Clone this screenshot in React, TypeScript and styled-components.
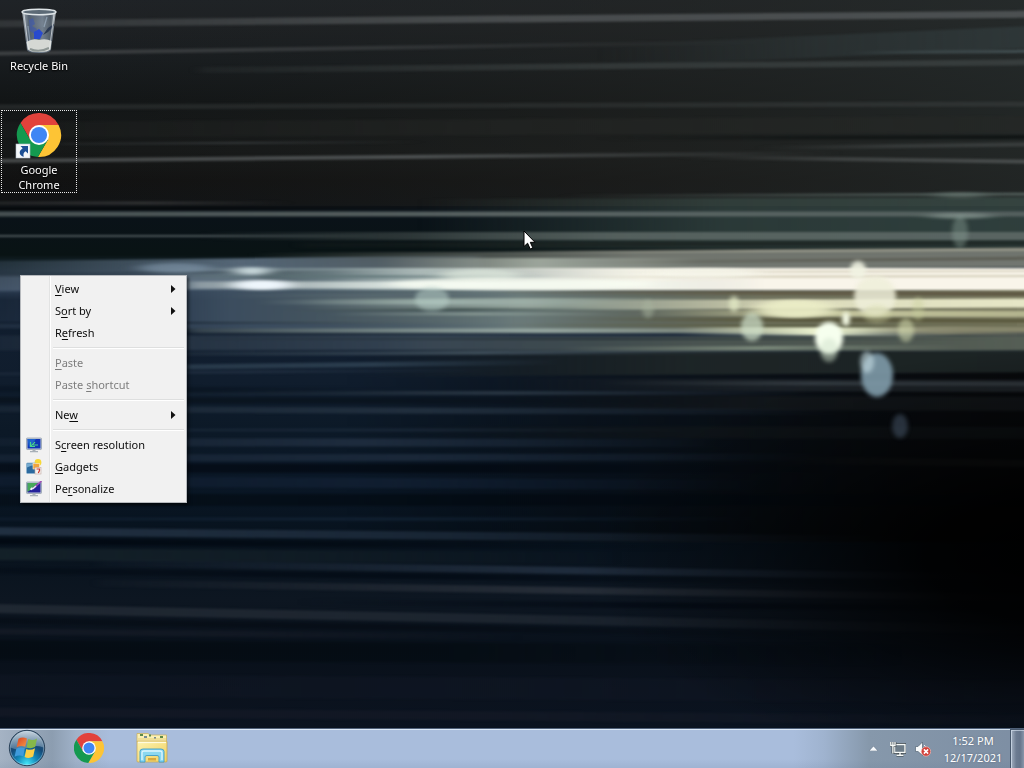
import React, { useEffect, useState } from "react";
import styled, { createGlobalStyle } from "styled-components";

const GlobalStyle = createGlobalStyle`
  *, *::before, *::after { box-sizing: border-box; }
  html, body, #root { height: 100%; }
  body {
    margin: 0;
    overflow: hidden;
    background: #000;
    font-family: "Noto Sans", "Open Sans", sans-serif;
    font-size: 12px;
  }
  button { font: inherit; color: inherit; border: 0; background: none; padding: 0; }
`;

const Screen = styled.div`
  display: flex;
  flex-direction: column;
  height: 100vh;
`;

const Desktop = styled.main`
  position: relative;
  flex: 1;
  min-height: 0;
  isolation: isolate;
`;

const WallpaperArt = styled.svg`
  position: absolute;
  inset: 0;
  z-index: -1;
  width: 100%;
  height: 100%;
`;

const Shortcuts = styled.nav`
  display: flex;
  flex-direction: column;
  align-items: flex-start;
  gap: 36px;
  padding: 6px 1px;
`;

const Shortcut = styled.button<{ $focused?: boolean }>`
  display: flex;
  flex-direction: column;
  align-items: center;
  gap: 3px;
  width: 76px;
  border: 1px dotted ${(p) => (p.$focused ? "#e8e8e8" : "transparent")};
  color: #fff;
  font-size: 11px;
  line-height: 15px;
  text-shadow: 0 1px 2px #000, 0 0 2px #000;
  svg { display: block; width: 48px; height: 48px; }
`;

const ShortcutLabel = styled.span`
  max-width: 64px;
`;

const Menu = styled.div`
  position: absolute;
  left: 20px;
  top: 275px;
  width: 167px;
  padding: 2px;
  border: 1px solid #f7f7f7;
  outline: 1px solid rgba(60, 70, 80, 0.35);
  outline-offset: -1px;
  color: #0c0c0c;
  background: linear-gradient(90deg, #f1f1f1 28px, #e2e3e3 28px, #e2e3e3 29px, #fff 29px, #fff 30px, #f1f1f1 30px);
  box-shadow: 2px 2px 3px rgba(0, 0, 0, 0.5);
`;

const MenuItem = styled.button`
  display: grid;
  grid-template-columns: 32px 1fr 13px;
  align-items: center;
  width: 100%;
  height: 22px;
  font-size: 11px;
  line-height: 22px;
  text-align: left;
  &:disabled { color: #7d7d7d; }
  svg { display: block; }
  u { text-underline-offset: 2px; text-decoration-thickness: 1px; text-decoration-skip-ink: none; }
`;

const MenuIcon = styled.span`
  padding-left: 3px;
`;

const Separator = styled.hr`
  height: 8px;
  margin: 0 0 0 30px;
  border: 0;
  background: linear-gradient(#f1f1f1 3px, #dedfdf 3px, #dedfdf 4px, #fff 4px, #fff 5px, #f1f1f1 5px);
`;

const Pointer = styled.svg`
  position: absolute;
  left: 51.1%;
  top: 230px;
  width: 13px;
  height: 20px;
`;

const Taskbar = styled.footer`
  display: flex;
  height: 40px;
  border-top: 1px solid #4f6078;
  background:
    linear-gradient(rgba(226, 238, 250, 0.85) 1px, transparent 1px, transparent 30px, rgba(90, 110, 140, 0.12)),
    linear-gradient(90deg, #a5b3c4, #8c9db0 52px, #a0b2c9 76px, #a9bddc 110px, #a9bddc calc(100% - 230px), #9fb3cf calc(100% - 200px), #8698ab calc(100% - 155px), #7d8ea3);
`;

const TaskButton = styled.button`
  display: flex;
  align-items: center;
  justify-content: center;
  width: 63px;
  padding-bottom: 2px;
  &:first-child { width: 57px; padding-right: 4px; }
  svg { display: block; }
`;

const Tray = styled.div`
  display: flex;
  align-items: center;
  gap: 9px;
  margin-left: auto;
`;

const TrayButton = styled.button`
  display: flex;
  align-items: center;
  justify-content: center;
  height: 24px;
  &:first-child { margin-right: 3px; }
  svg { display: block; }
`;

const Clock = styled.button`
  width: 66px;
  color: #fff;
  font-size: 11px;
  line-height: 17px;
  text-align: center;
  text-shadow: 0 0 2px rgba(60, 75, 95, 0.6);
`;

const ShowDesktop = styled.button`
  width: 14px;
  margin-left: 4px;
  border: 1px solid #46566a;
  border-right: 0;
  border-bottom: 0;
  background: linear-gradient(90deg, #a3b0c1, #6c7b91 40%, #66758b 70%, #8896aa);
  box-shadow: inset 1px 1px 0 rgba(220, 232, 245, 0.6);
`;

/* x1, y1, x2, y2, thickness, colour, opacity at start / middle / end */
type Streak = [number, number, number, number, number, string, number, number, number];

const streaks: Streak[] = [
  // upper sky
  [0, 24, 1024, 14, 7, "#565a5c", 0.35, 0.75, 0.8],
  [0, 54, 760, 42, 4, "#414446", 0.9, 0.6, 0],
  [200, 70, 1024, 62, 6, "#3c4242", 0.2, 0.7, 0.8],
  [600, 56, 1024, 36, 22, "#354042", 0, 0.4, 0.6],
  [850, 53, 1024, 51, 3, "#506064", 0, 0.5, 0.7],
  [0, 107, 1024, 104, 5, "#353939", 0.5, 0.5, 0.7],
  [0, 130, 1024, 124, 16, "#262826", 0.2, 0.5, 0.6],
  [600, 138, 1024, 137, 4, "#0c1010", 0, 0.6, 0.8],
  [60, 144, 420, 142, 2, "#3a3e40", 0.3, 0.8, 0],
  [0, 161, 840, 153, 4, "#585c5d", 0.7, 0.8, 0],
  [680, 157, 1024, 162, 4, "#4c5050", 0, 0.7, 0.9],
  [760, 148, 1024, 144, 4, "#434747", 0, 0.6, 0.7],
  [0, 203, 290, 203, 3, "#38393b", 0.5, 0.8, 0],
  [0, 209, 400, 208, 2, "#000000", 0.7, 0.6, 0],
  [560, 196, 1024, 194, 3, "#5a6864", 0, 0.5, 0.8],
  [420, 224, 1024, 222, 50, "#3c4e49", 0, 0.65, 0.75],
  [0, 214, 1024, 214, 5, "#616b6a", 0.7, 0.9, 0.75],
  [0, 236, 400, 236, 2, "#5b6568", 0.8, 0.8, 0],
  [200, 236, 1024, 236, 8, "#616c69", 0, 0.8, 0.85],
  [300, 245, 1024, 243, 5, "#1c2321", 0.2, 0.8, 0.7],
  // halo over the beam
  [0, 268, 480, 262, 13, "#5d6f80", 0.2, 0.9, 0.4],
  [250, 262, 1024, 258, 18, "#7c8078", 0, 0.9, 0.9],
  [500, 252, 1024, 249, 3, "#aaa999", 0, 0.7, 0.8],
  [540, 263, 1024, 258, 3, "#58574e", 0, 0.6, 0.8],
  [380, 263, 700, 263, 10, "#aeb7ab", 0, 0.8, 0],
  // beam
  [0, 283, 260, 281, 17, "#607184", 0.5, 0.9, 0.6],
  [0, 275, 240, 275, 3, "#1f2c38", 0.5, 0.5, 0],
  [140, 279, 700, 279, 22, "#93a6a8", 0, 0.95, 0],
  [330, 279, 960, 279, 22, "#f6f8ec", 0, 1, 0],
  [500, 279, 1024, 279, 22, "#f9f5ea", 0, 1, 1],
  [190, 285, 760, 285, 7, "#ecf4ee", 0.3, 0.95, 0],
  [190, 276, 560, 277, 3, "#5c7274", 0.3, 0.7, 0],
  [560, 277, 1024, 276, 2, "#c6c0a8", 0, 0.8, 0.7],
  [600, 272, 1024, 271, 2, "#c0baa2", 0, 0.6, 0.5],
  // under the beam
  [0, 306, 460, 306, 32, "#31435a", 0.3, 0.9, 0],
  [180, 311, 860, 311, 42, "#6f8080", 0.1, 0.95, 0],
  [500, 312, 1024, 311, 42, "#7b7b61", 0, 0.85, 1],
  [480, 292, 1024, 294, 4, "#5c5440", 0, 0.7, 0.9],
  [230, 296, 520, 295, 4, "#5b6b72", 0, 0.7, 0],
  [300, 304, 760, 304, 12, "#b4c4b6", 0, 0.6, 0],
  [260, 302, 620, 302, 5, "#a3b7b0", 0, 0.85, 0],
  [280, 310, 640, 309, 3, "#374745", 0, 0.7, 0],
  [330, 314, 620, 314, 3, "#93a49c", 0, 0.7, 0],
  [560, 305, 1024, 303, 9, "#e6e6c6", 0, 0.9, 1],
  [640, 313, 1024, 314, 6, "#d8d9ac", 0, 0.8, 0.6],
  [560, 319, 1024, 321, 4, "#545237", 0, 0.8, 0.8],
  [500, 325, 1024, 326, 3, "#5a5c43", 0, 0.8, 0.6],
  [0, 326, 520, 326, 5, "#41546a", 0.3, 0.7, 0],
  [190, 331, 900, 331, 5, "#a9bab2", 0.15, 0.7, 0],
  [680, 331, 960, 332, 8, "#eff6d2", 0, 1, 0],
  [860, 330, 1024, 331, 9, "#8d8c72", 0, 0.8, 0.6],
  [0, 343, 860, 342, 15, "#3d4c5b", 0.2, 0.8, 0],
  [380, 345, 1024, 343, 15, "#626a5c", 0, 0.65, 0.85],
  [200, 339, 1000, 339, 2, "#202b31", 0.2, 0.7, 0],
  [560, 349, 960, 347, 4, "#8d9c8a", 0, 0.7, 0],
  [100, 354, 860, 352, 4, "#4e5f6b", 0, 0.7, 0],
  [360, 366, 1024, 361, 22, "#222a2a", 0, 0.8, 0.8],
  [180, 367, 560, 362, 5, "#364a5b", 0.6, 0.7, 0],
  [0, 374, 500, 370, 3, "#2d3c4f", 0.3, 0.5, 0],
  [500, 384, 1024, 386, 12, "#252b30", 0, 0.6, 0.8],
  [600, 383, 1024, 384, 4, "#3a4248", 0, 0.7, 0.7],
  // lower water
  [180, 393, 820, 393, 4, "#303d4a", 0.1, 0.75, 0],
  [500, 402, 1024, 404, 14, "#15191c", 0, 0.7, 0.8],
  [0, 389, 420, 391, 6, "#06101b", 0.4, 0.5, 0],
  [0, 409, 840, 412, 6, "#263443", 0.4, 0.8, 0],
  [0, 400, 760, 401, 6, "#070e15", 0.5, 0.5, 0],
  [180, 430, 700, 430, 3, "#243345", 0.4, 0.5, 0],
  [400, 432, 1024, 433, 12, "#12171a", 0, 0.6, 0.7],
  [0, 442, 720, 443, 8, "#202e40", 0.3, 0.9, 0],
  [0, 458, 820, 457, 7, "#1e2c3e", 0.5, 0.8, 0],
  [0, 468, 900, 469, 9, "#02070f", 0.5, 0.7, 0],
  [780, 460, 1024, 464, 7, "#161819", 0, 0.5, 0.9],
  [0, 481, 760, 485, 10, "#122033", 0.5, 0.8, 0],
  [0, 500, 1024, 500, 12, "#020910", 0.4, 0.7, 0.4],
  [0, 519, 760, 519, 3, "#16273a", 0.4, 0.7, 0],
  [0, 531, 900, 540, 8, "#243345", 0.9, 0.6, 0],
  [0, 541, 700, 547, 6, "#020912", 0.9, 0.6, 0],
  [0, 554, 620, 558, 12, "#17242b", 0.8, 0.5, 0],
  [100, 563, 1024, 578, 7, "#233041", 0.1, 0.85, 0.1],
  [0, 570, 900, 583, 6, "#030b15", 0.5, 0.8, 0],
  [100, 583, 1024, 598, 7, "#282f39", 0.1, 0.9, 0.2],
  [0, 608, 1024, 630, 9, "#222a34", 0.9, 0.75, 0.1],
  [300, 602, 1024, 609, 6, "#030a14", 0, 0.8, 0.2],
  [0, 620, 900, 636, 6, "#050b13", 0.5, 0.6, 0],
  [0, 631, 520, 637, 6, "#191e29", 0.6, 0.5, 0],
  [0, 650, 900, 655, 20, "#050c12", 0.7, 0.7, 0],
  [0, 685, 1024, 692, 22, "#101724", 0.5, 0.6, 0.3],
  [0, 712, 1024, 720, 9, "#151a26", 0.7, 0.7, 0.3],
];

/* cx, cy, rx, ry, colour, opacity */
type Light = [number, number, number, number, string, number];

const flares: Light[] = [
  [175, 268, 36, 5, "#8499ae", 0.6],
  [252, 271, 18, 4, "#d3e2e4", 0.9],
  [262, 285, 30, 5, "#eef6fc", 1],
  [480, 275, 40, 6, "#e8f2e4", 0.6],
  [520, 284, 130, 6, "#fbfff4", 0.7],
  [705, 273, 55, 5, "#fbfbf0", 0.6],
  [795, 309, 40, 9, "#ebedc6", 0.9],
  [960, 216, 32, 3, "#8fa099", 0.6],
  [960, 195, 26, 3, "#74857e", 0.5],
];

const orbs: Light[] = [
  [432, 299, 17, 12, "#b6cec6", 0.55],
  [648, 309, 6, 9, "#a7b39d", 0.5],
  [734, 304, 5, 8, "#e6edc8", 0.7],
  [752, 327, 11, 14, "#cfe0c9", 0.7],
  [829, 338, 14, 16, "#f6ffee", 1],
  [829, 350, 9, 12, "#cfe2cc", 0.5],
  [846, 319, 4, 7, "#f6fce6", 1],
  [858, 270, 8, 9, "#f1f3e2", 0.9],
  [875, 296, 21, 20, "#eeeed9", 0.85],
  [877, 314, 14, 9, "#d3d7a4", 0.4],
  [906, 330, 8, 12, "#e0e8b8", 0.5],
  [918, 309, 6, 12, "#c9cf9a", 0.4],
  [877, 375, 16, 22, "#7f9baa", 0.9],
  [867, 362, 7, 11, "#c7dde4", 0.6],
  [900, 426, 8, 12, "#4a5a6d", 0.5],
  [960, 232, 8, 16, "#8ea49c", 0.4],
];

function Wallpaper() {
  return (
    <WallpaperArt viewBox="0 0 1024 728" preserveAspectRatio="none" aria-hidden="true">
      <defs>
        <linearGradient id="ground" x1="0" y1="0" x2="0" y2="728" gradientUnits="userSpaceOnUse">
          {[
            [0, "#1f2327"], [22, "#1e2124"], [60, "#181c1f"], [100, "#121516"], [150, "#161818"], [180, "#111111"],
            [204, "#101214"], [212, "#0a1219"], [255, "#091314"], [262, "#142128"], [290, "#26364a"], [300, "#0e1a29"],
            [340, "#111e2f"], [380, "#101d2d"], [430, "#0c1927"], [480, "#0a1726"], [540, "#07121d"], [600, "#0d1621"],
            [650, "#08101a"], [690, "#0b121d"], [728, "#0a1320"],
          ].map(([y, c]) => (
            <stop key={y} offset={Number(y) / 728} stopColor={String(c)} />
          ))}
        </linearGradient>
        <linearGradient id="warm" x1="0" x2="1">
          <stop offset="0" stopColor="#1c1f1e" stopOpacity="0" />
          <stop offset="0.6" stopColor="#242624" stopOpacity="0.5" />
          <stop offset="1" stopColor="#272c2b" stopOpacity="0.75" />
        </linearGradient>
        <radialGradient id="night" cx="1070" cy="560" r="480" gradientUnits="userSpaceOnUse" gradientTransform="translate(0 314) scale(1 .44)">
          <stop offset="0" stopColor="#000" stopOpacity="1" />
          <stop offset="0.3" stopColor="#000" stopOpacity="0.9" />
          <stop offset="0.65" stopColor="#000" stopOpacity="0.4" />
          <stop offset="1" stopColor="#000" stopOpacity="0" />
        </radialGradient>
        <linearGradient id="shade" x1="0" x2="1">
          <stop offset="0.35" stopColor="#000" stopOpacity="0" />
          <stop offset="0.85" stopColor="#070809" stopOpacity="0.8" />
          <stop offset="1" stopColor="#070707" stopOpacity="0.9" />
        </linearGradient>
        <filter id="smear" x="-5%" y="-5%" width="110%" height="110%" colorInterpolationFilters="sRGB">
          <feGaussianBlur stdDeviation="6 1" />
        </filter>
        <filter id="flare" x="-10%" y="-10%" width="120%" height="120%" colorInterpolationFilters="sRGB">
          <feGaussianBlur stdDeviation="9 1.5" />
        </filter>
        <filter id="glow" x="-5%" y="-5%" width="110%" height="110%" colorInterpolationFilters="sRGB">
          <feGaussianBlur stdDeviation="2" />
        </filter>
        {streaks.map(([x1, , x2, , , c, a, b, d], i) => (
          <linearGradient key={i} id={`s${i}`} x1={x1} x2={x2} y1="0" y2="0" gradientUnits="userSpaceOnUse">
            <stop offset="0" stopColor={c} stopOpacity={a} />
            <stop offset="0.5" stopColor={c} stopOpacity={b} />
            <stop offset="1" stopColor={c} stopOpacity={d} />
          </linearGradient>
        ))}
      </defs>
      <rect width="1024" height="728" fill="url(#ground)" />
      <rect width="1024" height="206" fill="url(#warm)" />
      <g filter="url(#smear)">
        <rect x="-30" y="352" width="1084" height="190" fill="url(#shade)" />
        {streaks.map(([x1, y1, x2, y2, t], i) => {
          const l = x1 === 0 ? -30 : x1;
          const r = x2 === 1024 ? 1054 : x2;
          const h = t / 2;
          return <path key={i} d={`M${l} ${y1 - h}L${r} ${y2 - h}V${y2 + h}L${l} ${y1 + h}Z`} fill={`url(#s${i})`} />;
        })}
      </g>
      <rect y="340" width="1024" height="388" fill="url(#night)" />
      <g filter="url(#flare)">
        {flares.map(([cx, cy, rx, ry, c, o], i) => (
          <ellipse key={i} cx={cx} cy={cy} rx={rx} ry={ry} fill={c} opacity={o} />
        ))}
      </g>
      <g filter="url(#glow)">
        {orbs.map(([cx, cy, rx, ry, c, o], i) => (
          <ellipse key={i} cx={cx} cy={cy} rx={rx} ry={ry} fill={c} opacity={o} />
        ))}
      </g>
    </WallpaperArt>
  );
}

function ChromeLogo({ size, shortcut = false }: { size: number; shortcut?: boolean }) {
  return (
    <svg width={size} height={size} viewBox={shortcut ? "0 0 48 48" : "2 2 44 44"} aria-hidden="true">
      <path d="M43.6 14H24L15.3 29 5.5 12A22 22 0 0 1 43.6 14Z" fill="#e2423b" />
      <path d="M43.6 14A22 22 0 0 1 22.9 46L32.7 29 24 14Z" fill="#fdc435" />
      <path d="M22.9 46A22 22 0 0 1 5.5 12L15.3 29H32.7Z" fill="#14994f" />
      <circle cx="24" cy="24" r="10" fill="#fff" />
      <circle cx="24" cy="24" r="8.1" fill="#4086f4" />
      {shortcut && (
        <g>
          <rect x="1" y="33" width="14" height="14" fill="#f4f7fa" stroke="#b9c4cf" strokeWidth=".6" />
          <path d="M5.500 35H13V42.500L10.600 40.200C8.600 41.500 8 43.200 8.800 45.800 3.800 44.500 3.300 40.200 7.700 37.300Z" fill="#1c4f94" />
        </g>
      )}
    </svg>
  );
}

function RecycleBin() {
  return (
    <svg viewBox="0 0 48 48" aria-hidden="true">
      <defs>
        <linearGradient id="glass" x1="0" x2="1">
          <stop offset="0" stopColor="#c5ced6" stopOpacity=".85" />
          <stop offset=".2" stopColor="#5f6f82" stopOpacity=".8" />
          <stop offset=".6" stopColor="#8797a8" stopOpacity=".8" />
          <stop offset=".85" stopColor="#5d6a77" stopOpacity=".8" />
          <stop offset="1" stopColor="#d3d9de" stopOpacity=".9" />
        </linearGradient>
      </defs>
      <path d="M7 4 12 43Q13 46 24 46T36 43L41 4Z" fill="url(#glass)" />
      <path d="M11.500 35Q17 31 24 33 31 31 36.500 34L35.500 42.500Q33 45 24 45T12.800 42.500Z" fill="#d5d8d4" />
      <path d="M15 42Q24 46 34 41" fill="none" stroke="#8d9694" strokeWidth="2" />
      <path d="M14 13l4-2 2 6-3 2 5 3-2 5-5-3Z" fill="#3c56b0" opacity=".6" />
      <path d="M19 25l5-3 4 4-3 6h-6Z" fill="#2246d6" opacity=".9" />
      <path d="M28 28l5-7 6-4-1 3-5 5Z" fill="#2b3950" />
      <path d="M13 19 15 34M32 10 29 20" stroke="#a4b7cb" strokeWidth="1.200" opacity=".6" />
      <path d="M9 7 13.500 42M39 7 34.500 42" stroke="#e3e8eb" strokeWidth="1" opacity=".7" />
      <ellipse cx="24" cy="5" rx="17" ry="2.800" fill="#5c6a76" stroke="#dfe5e8" strokeWidth="1.400" />
    </svg>
  );
}

function Monitor({ brush = false }: { brush?: boolean }) {
  return (
    <svg width="16" height="16" viewBox="0 0 16 16" aria-hidden="true">
      <rect x=".5" y="1" width="15" height="11.500" rx=".8" fill="#c6d0da" stroke="#8a97a6" strokeWidth=".7" />
      <rect x="1.500" y="2" width="13" height="9.500" fill={brush ? "#24209a" : "#1033b4"} />
      {brush ? (
        <g>
          <path d="M1.500 2H12L5 8.500 1.500 11Z" fill="#47a85a" />
          <path d="M4 8.500C5 6 6.500 6.200 7.500 7.500L5.500 9.200Z" fill="#f1f4fa" />
          <path d="M7 7.500 15.500 0" stroke="#a052b5" strokeWidth="1.600" />
          <path d="M6.500 8 10 5" stroke="#e8e8f2" strokeWidth="1.400" />
        </g>
      ) : (
        <g>
          <path d="M1.500 2H10L3 10.500Z" fill="#1f62cc" />
          <path d="M4.500 5V9.500H9M4.500 9.500 9 5M7 8H12" fill="none" stroke="#49d48c" strokeWidth="1.100" />
        </g>
      )}
      <path d="M6.500 12.500h3v1.500h2.500v1.200H4v-1.200h2.500Z" fill="#a8b0b8" />
    </svg>
  );
}

function GadgetsIcon() {
  return (
    <svg width="16" height="16" viewBox="0 0 16 16" aria-hidden="true">
      <circle cx="12" cy="3.500" r="3.400" fill="#f7d836" />
      <rect x=".5" y="4" width="9.500" height="10.500" rx="1" fill="#2c6a9f" stroke="#8eb4cf" strokeWidth=".8" />
      <path d="M1 8.500Q5 6 9.500 6V4.500H1Z" fill="#76abd0" />
      <rect x="7" y="4.500" width="6.500" height="5.500" fill="#f0a33d" stroke="#fff0cf" strokeWidth=".6" />
      <rect x="9" y="8.500" width="6" height="6.500" fill="#f7f2ef" stroke="#c4aaa3" strokeWidth=".6" />
      <path d="M10.500 10h3v1.500l-1.200 2.500" fill="none" stroke="#d0392f" strokeWidth="1.200" />
    </svg>
  );
}

function StartOrb() {
  return (
    <svg width="38" height="38" viewBox="0 0 38 38" aria-hidden="true">
      <defs>
        <radialGradient id="orb" cx=".5" cy=".95" r=".85">
          <stop offset="0" stopColor="#45e6f7" />
          <stop offset=".35" stopColor="#1286b8" />
          <stop offset=".65" stopColor="#154a78" />
          <stop offset="1" stopColor="#395a78" />
        </radialGradient>
        <linearGradient id="shine" x1="0" y1="0" x2="0" y2="1">
          <stop offset="0" stopColor="#dfe9f0" stopOpacity=".85" />
          <stop offset="1" stopColor="#a9c0d2" stopOpacity=".35" />
        </linearGradient>
        <linearGradient id="flagRed" x1="0" y1="0" x2="1" y2="1">
          <stop offset="0" stopColor="#d9401e" />
          <stop offset="1" stopColor="#f49a4c" />
        </linearGradient>
      </defs>
      <circle cx="19" cy="19" r="17.700" fill="url(#orb)" stroke="#2a4158" strokeWidth="1" />
      <path d="M2.500 18.500A16.500 16.500 0 0 1 35.500 18.500Q27 15.500 19 19 10 22 2.500 18.500Z" fill="url(#shine)" />
      <circle cx="19" cy="19" r="16.700" fill="none" stroke="#cfe4ef" strokeOpacity=".5" strokeWidth=".8" />
      <path d="M10.500 9.800Q14.500 7.200 19 9.500L17.200 17.800Q13 16 8.600 18.300Z" fill="url(#flagRed)" />
      <path d="M20.300 10Q24.800 12.300 29 9.500L27.300 17.800Q22.800 20.500 18.600 18.300Z" fill="#85b84a" />
      <path d="M8.300 19.700Q12.700 17.500 16.900 19.300L15.200 27.300Q11 25.300 6.600 27.800Z" fill="#3f9bdc" />
      <path d="M18.300 19.900Q22.500 22 27 19.300L25.200 27.600Q20.800 30.300 16.600 28Z" fill="#fbcf45" />
    </svg>
  );
}

function ExplorerIcon() {
  return (
    <svg width="32" height="32" viewBox="0 0 32 32" aria-hidden="true">
      <defs>
        <linearGradient id="folder" x1="0" y1="0" x2="1" y2="1">
          <stop offset="0" stopColor="#fdf3b0" />
          <stop offset="1" stopColor="#f0d060" />
        </linearGradient>
      </defs>
      <path d="M1 1.500H12L14 3H30.500V10H1Z" fill="#faf0b4" stroke="#c9ae58" strokeWidth=".7" />
      <path d="M4 3h3M13 3.500h2M24 5h3" stroke="#5c8a48" strokeWidth="1.800" />
      <path d="M8 5h3M18 6h2" stroke="#4a6a88" strokeWidth="1.600" />
      <path d="M2 7H30" stroke="#e6cf78" strokeWidth="1" />
      <rect x="1" y="9" width="30" height="21" rx="1" fill="url(#folder)" stroke="#c3a24a" strokeWidth=".7" />
      <path d="M2 10.500H30" stroke="#fffbe0" strokeWidth="1.200" />
      <path d="M4 30V19.500Q4 17 7 17H25Q28 17 28 19.500V30H23V25Q23 23.500 21 23.500H11Q9 23.500 9 25V30Z" fill="#8bd8f0" stroke="#3d9cc8" strokeWidth=".9" />
      <path d="M6 28V20.500Q6 19 8 19H24Q26 19 26 20.500V28" fill="none" stroke="#dff6fd" strokeWidth="1.300" />
      <path d="M12 26H20V28.500H12Z" fill="#d8a93c" />
    </svg>
  );
}

function NetworkIcon() {
  return (
    <svg width="16" height="16" viewBox="0 0 16 16" aria-hidden="true">
      <rect x="4.500" y="3.500" width="10.500" height="8" fill="#73838f" stroke="#2f3a40" strokeWidth="2.800" />
      <rect x="4.500" y="3.500" width="10.500" height="8" fill="#6d7c88" stroke="#f7faf8" strokeWidth="1.400" />
      <path d="M6.500 14.200H13.500M10 12V14" stroke="#2f3a40" strokeWidth="2.800" />
      <path d="M6.500 14.200H13.500M10 12V14" stroke="#f7faf8" strokeWidth="1.400" />
      <path d="M.8 1V4.500H5V1M2.900 1V12.500" fill="none" stroke="#2f3a40" strokeWidth="2.600" />
      <path d="M.8 1V4.500H5V1M2.900 1V12.500" fill="none" stroke="#f7faf8" strokeWidth="1.400" />
    </svg>
  );
}

function VolumeIcon() {
  return (
    <svg width="16" height="16" viewBox="0 0 16 16" aria-hidden="true">
      <path d="M.5 5.500H3L7.500 1V14.500L3 10.500H.5Z" fill="#f8fafb" stroke="#556575" strokeWidth=".7" />
      <path d="M9 4Q11 5.500 11 7" fill="none" stroke="#f0f3f6" strokeWidth="1" />
      <circle cx="11" cy="10.500" r="4.700" fill="#d2403a" stroke="#f1b9b2" strokeWidth=".7" />
      <path d="M8.900 8.400 13.100 12.600M13.100 8.400 8.900 12.600" stroke="#fff" strokeWidth="1.500" />
    </svg>
  );
}

function SubmenuArrow() {
  return (
    <svg width="5" height="8" viewBox="0 0 5 8" aria-hidden="true">
      <path d="M0 0 4.500 4 0 8Z" fill="#111" />
    </svg>
  );
}

type Entry = { text: [string, string, string]; icon?: React.ReactNode; submenu?: boolean; disabled?: boolean };

const groups: Entry[][] = [
  [
    { text: ["", "V", "iew"], submenu: true },
    { text: ["S", "o", "rt by"], submenu: true },
    { text: ["R", "e", "fresh"] },
  ],
  [
    { text: ["", "P", "aste"], disabled: true },
    { text: ["Paste ", "s", "hortcut"], disabled: true },
  ],
  [{ text: ["Ne", "w", ""], submenu: true }],
  [
    { text: ["S", "c", "reen resolution"], icon: <Monitor /> },
    { text: ["", "G", "adgets"], icon: <GadgetsIcon /> },
    { text: ["Pe", "r", "sonalize"], icon: <Monitor brush /> },
  ],
];

function ContextMenu() {
  return (
    <Menu role="menu">
      {groups.map((entries, g) => (
        <React.Fragment key={g}>
          {g > 0 && <Separator />}
          {entries.map(({ text, icon, submenu, disabled }) => (
            <MenuItem key={text.join("")} role="menuitem" disabled={disabled} aria-haspopup={submenu ? "menu" : undefined}>
              <MenuIcon>{icon}</MenuIcon>
              <span>{text[0]}<u>{text[1]}</u>{text[2]}</span>
              {submenu && <SubmenuArrow />}
            </MenuItem>
          ))}
        </React.Fragment>
      ))}
    </Menu>
  );
}

export default function App() {
  const [menuOpen, setMenuOpen] = useState(true);
  useEffect(() => {
    const close = (e: KeyboardEvent) => e.key === "Escape" && setMenuOpen(false);
    window.addEventListener("keydown", close);
    return () => window.removeEventListener("keydown", close);
  }, []);

  return (
    <Screen>
      <GlobalStyle />
      <Desktop>
        <Wallpaper />
        <Shortcuts>
          <Shortcut>
            <RecycleBin />
            <ShortcutLabel>Recycle Bin</ShortcutLabel>
          </Shortcut>
          <Shortcut $focused>
            <ChromeLogo size={48} shortcut />
            <ShortcutLabel>Google Chrome</ShortcutLabel>
          </Shortcut>
        </Shortcuts>
        {menuOpen && <ContextMenu />}
        <Pointer viewBox="0 0 13 20" aria-hidden="true">
          <path d="M1 1V16.500L4.600 13.200 7.200 19 9.800 17.800 7.300 12.300H12Z" fill="#fff" stroke="#000" strokeWidth="1" />
        </Pointer>
      </Desktop>
      <Taskbar>
        <TaskButton aria-label="Start"><StartOrb /></TaskButton>
        <TaskButton aria-label="Google Chrome"><ChromeLogo size={30} /></TaskButton>
        <TaskButton aria-label="Windows Explorer"><ExplorerIcon /></TaskButton>
        <Tray>
          <TrayButton aria-label="Show hidden icons">
            <svg width="9" height="5" viewBox="0 0 9 5" aria-hidden="true">
              <path d="M0 5 4.500 0 9 5Z" fill="#f6f9fc" stroke="#5d6d7f" strokeWidth=".5" />
            </svg>
          </TrayButton>
          <TrayButton aria-label="Network"><NetworkIcon /></TrayButton>
          <TrayButton aria-label="Volume"><VolumeIcon /></TrayButton>
          <Clock>1:52 PM<br />12/17/2021</Clock>
        </Tray>
        <ShowDesktop aria-label="Show desktop" />
      </Taskbar>
    </Screen>
  );
}
